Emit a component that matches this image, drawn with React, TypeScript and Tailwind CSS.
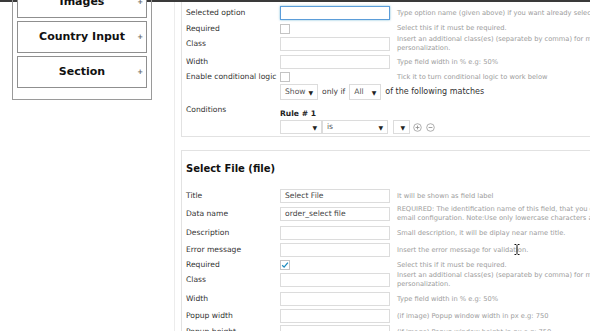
import type { ReactNode } from 'react'

function Input({ value, focus }: { value?: string; focus?: boolean }) {
  return (
    <div
      className={`w-[110px] h-[14px] shrink-0 flex items-center px-[4px] text-[7.6px] text-[#444] bg-white border ${
        focus ? 'border-[#5b9dd9] shadow-[0_0_2px_rgba(30,140,190,0.6)]' : 'border-[#dcdcdc]'
      }`}
    >
      {value}
    </div>
  )
}

function Checkbox({ checked }: { checked?: boolean }) {
  return (
    <div className="w-[10px] h-[10px] shrink-0 border border-[#c4c4c4] bg-white flex items-center justify-center mr-[100px]">
      {checked && (
        <svg width="8" height="8" viewBox="0 0 8 8">
          <path d="M1.2 4.2 L3.1 6.1 L6.9 1.6" fill="none" stroke="#1e8cbe" strokeWidth="1.3" />
        </svg>
      )}
    </div>
  )
}

function Select({ value, w, h }: { value?: string; w: string; h: string }) {
  return (
    <div className={`${w} ${h} shrink-0 flex items-center justify-between pl-[4px] pr-[4px] border border-[#dcdcdc] bg-white text-[7.6px] text-[#555]`}>
      <span>{value}</span>
      <span className="text-[6px] text-[#222]">▼</span>
    </div>
  )
}

function Help({ lines }: { lines: string[] }) {
  return (
    <div className="ml-[7px] text-[6.7px] leading-[9px] text-[#9c9c9c] whitespace-nowrap">
      {lines.map((l) => (
        <div key={l}>{l}</div>
      ))}
    </div>
  )
}

function Row({ h, label, children }: { h: string; label: string; children: ReactNode }) {
  return (
    <div className={`${h} flex items-center`}>
      <div className="w-[94px] shrink-0 text-[7.6px] text-[#333] whitespace-nowrap">{label}</div>
      {children}
    </div>
  )
}

function RoundIcon({ minus }: { minus?: boolean }) {
  return (
    <svg width="9" height="9" viewBox="0 0 9 9" className="shrink-0">
      <circle cx="4.5" cy="4.5" r="3.8" fill="white" stroke="#9a9a9a" strokeWidth="0.8" />
      <path d={minus ? 'M2.6 4.5 H6.4' : 'M2.6 4.5 H6.4 M4.5 2.6 V6.4'} stroke="#8a8a8a" strokeWidth="0.8" />
    </svg>
  )
}

function SideButton({ label }: { label: string }) {
  return (
    <div className="relative h-[32px] flex items-center justify-center border border-[#8f8f8f] bg-white text-[11px] font-bold text-[#111]">
      {label}
      <span className="absolute right-[3px] top-[11px] text-[7px] leading-[8px] text-[#666]">+</span>
    </div>
  )
}

export default function App() {
  return (
    <div className="w-[590px] h-[331px] overflow-hidden bg-white font-['DejaVu_Sans',Verdana,sans-serif]">
      <div className="h-[2px] bg-[#3a3a3a]" />
      <div className="flex">
        {/* Sidebar */}
        <div className="w-[175px] shrink-0 h-[329px] border-r border-[#ececec] pl-[12px]">
          <div className="w-[140px] mt-[-21px] border border-[#9a9a9a] px-[4px] pt-[4px] pb-[11px] flex flex-col gap-[3px]">
            <SideButton label="Images" />
            <SideButton label="Country Input" />
            <SideButton label="Section" />
          </div>
        </div>

        {/* Fields */}
        <div className="flex-1 pl-[6px] overflow-hidden">
          <div className="w-[520px] border-l border-r border-b border-[#e2e2e2] pl-[4px]">
            <Row h="h-[22px]" label="Selected option">
              <Input focus />
              <Help lines={['Type option name (given above) if you want already selected option']} />
            </Row>
            <Row h="h-[9px]" label="Required">
              <Checkbox />
              <Help lines={['Select this if it must be required.']} />
            </Row>
            <Row h="h-[21px]" label="Class">
              <Input />
              <Help lines={['Insert an additional class(es) (separateb by comma) for more', 'personalization.']} />
            </Row>
            <Row h="h-[16px]" label="Width">
              <Input />
              <Help lines={['Type field width in % e.g: 50%']} />
            </Row>
            <Row h="h-[14px]" label="Enable conditional logic">
              <Checkbox />
              <Help lines={['Tick it to turn conditional logic to work below']} />
            </Row>
            <Row h="h-[16px]" label="">
              <Select value="Show" w="w-[38px]" h="h-[16px]" />
              <span className="mx-[4px] text-[7.6px] text-[#444]">only if</span>
              <Select value="All" w="w-[32px]" h="h-[16px]" />
              <span className="ml-[4px] text-[8px] text-[#333]">of the following matches</span>
            </Row>
            <div className="flex h-[36px]">
              <div className="w-[94px] shrink-0 pt-[4px] text-[7.6px] leading-[12px] text-[#333]">Conditions</div>
              <div className="pt-[8px]">
                <div className="text-[7.6px] leading-[12px] font-bold text-[#222]">Rule # 1</div>
                <div className="flex items-center">
                  <Select w="w-[42px]" h="h-[14px]" />
                  <Select value="is" w="w-[66px]" h="h-[14px]" />
                  <div className="ml-[5px]">
                    <Select w="w-[17px]" h="h-[14px]" />
                  </div>
                  <div className="ml-[3px] flex gap-[4px]">
                    <RoundIcon />
                    <RoundIcon minus />
                  </div>
                </div>
              </div>
            </div>
          </div>

          <div className="relative mt-[13px] w-[520px] border border-[#e2e2e2] pl-[4px]">
            <div className="pt-[11px] pb-[12px] text-[10px] leading-[14px] font-bold text-[#111]">Select File (file)</div>
            <Row h="h-[16px]" label="Title">
              <Input value="Select File" />
              <Help lines={['It will be shown as field label']} />
            </Row>
            <Row h="h-[20px]" label="Data name">
              <Input value="order_select file" />
              <Help
                lines={[
                  'REQUIRED: The identification name of this field, that you can insert into body',
                  'email configuration. Note:Use only lowercase characters and underscores.',
                ]}
              />
            </Row>
            <Row h="h-[18px]" label="Description">
              <Input />
              <Help lines={['Small description, it will be diplay near name title.']} />
            </Row>
            <Row h="h-[16px]" label="Error message">
              <Input />
              <Help lines={['Insert the error message for validation.']} />
            </Row>
            <Row h="h-[14px]" label="Required">
              <Checkbox checked />
              <Help lines={['Select this if it must be required.']} />
            </Row>
            <Row h="h-[16px]" label="Class">
              <Input />
              <Help lines={['Insert an additional class(es) (separateb by comma) for more', 'personalization.']} />
            </Row>
            <Row h="h-[22px]" label="Width">
              <Input />
              <Help lines={['Type field width in % e.g: 50%']} />
            </Row>
            <Row h="h-[12px]" label="Popup width">
              <Input />
              <Help lines={['(if image) Popup window width in px e.g: 750']} />
            </Row>
            <Row h="h-[20px]" label="Popup height">
              <Input />
              <Help lines={['(if image) Popup window height in px e.g: 750']} />
            </Row>

            {/* text cursor */}
            <svg width="6" height="11" viewBox="0 0 6 11" className="absolute left-[332px] top-[93px]">
              <path d="M0.5 0.5 H2.3 M3.7 0.5 H5.5 M3 1 V10 M0.5 10.5 H2.3 M3.7 10.5 H5.5" stroke="#111" strokeWidth="1" fill="none" />
            </svg>
          </div>
        </div>
      </div>
    </div>
  )
}
